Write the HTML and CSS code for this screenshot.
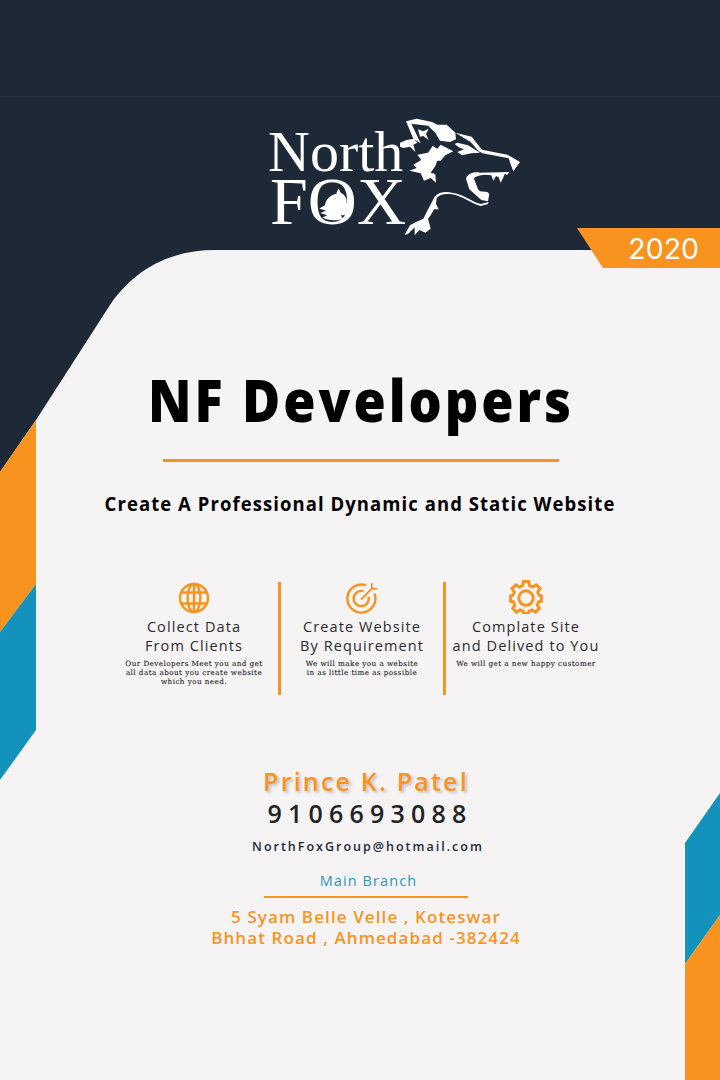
FILE: index.html
```html
<!DOCTYPE html>
<html lang="en">
<head>
<meta charset="utf-8">
<title>NF Developers</title>
<link rel="stylesheet" href="styles.css">
</head>
<body>
<main class="poster">
  <svg class="backdrop" viewBox="0 0 720 1080" aria-hidden="true">
    <rect class="paper" width="720" height="1080"/>
    <path class="navy" d="M0 0H720V250H215C172 250 135 268 110 305L36 420L0 472Z"/>
    <path class="seam" d="M0 96.5H720"/>
    <path class="orange" d="M36 420V584L0 632V472Z"/>
    <path class="blue" d="M36 584V730L0 780V632Z"/>
    <path class="blue" d="M720 793V915L685 964V843Z"/>
    <path class="orange" d="M720 915V1080H685V964Z"/>
  </svg>

  <div class="badge">2020</div>

  <header class="logo">
    <div class="logo-words">
      <span class="logo-north">North</span>
      <span class="logo-fox">F<span class="logo-o">O<svg class="logo-head" viewBox="0 0 30 30" aria-hidden="true"><path d="M5 27L9 25L3 23L8 21L2 19L7 16C8 10 13 7 17 6L19 1L21 5C25 7 27 11 26 14L29 17L26 20C27 24 24 25 21 25L23 28C17 30 10 30 5 27Z"/></svg></span>X</span>
    </div>
    <svg class="wolf" viewBox="0 0 375 375" aria-hidden="true">
      <g class="wolf-fill">
        <path d="M18 28L50 20L96 30L112 38L140 38L166 62L168 82L150 90L120 86L106 62L84 41L34 35L62 94L40 80Z"/>
        <path d="M54 52L70 58L86 50L78 66L86 84L70 72L60 74Z"/>
        <path d="M166 62L215 74L246 113L322 128L360 150L340 178L333 160L326 139L248 124L236 118L212 90Z"/>
        <path d="M164 96L172 92L204 100L240 122L214 124L186 130L172 120L192 112L176 106Z"/>
        <path d="M98 102L112 110L122 98L160 118L136 130L122 146L112 146L106 162L92 182L106 186L108 212L92 198L72 206L62 184L28 176L50 168L40 158L64 144L52 128L84 122Z"/>
        <path d="M0 92L20 84L42 80L52 92L40 98L46 120L30 104L10 108L0 104Z"/>
        <path d="M198 200C202 186 220 178 240 182L328 180L322 188L314 186L308 200L302 212L296 196L288 192L280 206L274 190L254 188C240 190 226 192 222 200L234 232L240 238L262 240L268 246L264 268L244 264L224 246L208 232Z"/>
        <path d="M104 254C116 240 136 238 156 242C190 246 214 268 242 276L266 270L264 276L242 282C212 274 188 252 156 247C136 244 120 246 110 258L108 276L116 292L102 292L92 310L84 320L92 350L76 362L58 354L44 370L44 346L24 366L14 368L30 340L48 330L70 320L82 296Z"/>
      </g>
    </svg>
  </header>

  <section class="intro">
    <h1>NF Developers</h1>
    <hr class="rule">
    <h2>Create A Professional Dynamic and Static Website</h2>
  </section>

  <section class="features">
    <article class="feature">
      <svg class="icon" viewBox="0 0 32 32" aria-hidden="true">
        <circle cx="16" cy="16" r="14"/>
        <ellipse cx="16" cy="16" rx="6.4" ry="14"/>
        <path d="M16 2V30M3.6 10.5H28.4M3.6 21.5H28.4"/>
      </svg>
      <h3>Collect Data<br>From Clients</h3>
      <p>Our Developers Meet you and get<br>all data about you create website<br>which you need.</p>
    </article>
    <article class="feature">
      <svg class="icon" viewBox="0 0 32 32" aria-hidden="true">
        <path d="M20 3.4A14 14 0 1 0 28.4 11.5"/>
        <path d="M17.4 9.2A7.6 7.6 0 1 0 22.6 14.6"/>
        <path class="icon-thin" d="M15 17.5L26 6.5M25.8 1V6.6H31.5"/>
      </svg>
      <h3>Create Website<br>By Requirement</h3>
      <p>We will make you a website<br>in as little time as possible</p>
    </article>
    <article class="feature">
      <svg class="icon icon-gear" viewBox="0 0 32 32" aria-hidden="true">
        <path d="M13.5 1.5H18.5L19.3 5.4L22.3 6.7L25.7 4.5L29.2 8L27 11.4L28.3 14.4L30.5 15V20L27.8 20.6L26.6 23.5L28.4 26.8L24.9 30.3L21.6 28.1L18.8 29.2L18.3 31.5H13.7L13.2 29.2L10.4 28.1L7.1 30.3L3.6 26.8L5.4 23.5L4.2 20.6L1.5 20V15L3.7 14.4L5 11.4L2.8 8L6.3 4.5L9.7 6.7L12.7 5.4Z"/>
        <circle cx="16" cy="17" r="6.8"/>
      </svg>
      <h3>Complate Site<br>and Delived to You</h3>
      <p>We will get a new happy customer</p>
    </article>
  </section>

  <address class="contact">
    <div class="name">Prince K. Patel</div>
    <div class="phone">9106693088</div>
    <div class="email">NorthFoxGroup@hotmail.com</div>
    <div class="branch">Main Branch</div>
    <hr class="branch-rule">
    <div class="street">5 Syam Belle Velle , Koteswar<br>Bhhat Road , Ahmedabad -382424</div>
  </address>
</main>
</body>
</html>
```
FILE: styles.css
```css
* { box-sizing: border-box; }
html, body { margin: 0; padding: 0; }
body { width: 720px; height: 1080px; overflow: hidden; font-family: "Open Sans", "Liberation Sans", sans-serif; }

.poster { position: relative; width: 720px; height: 1080px; overflow: hidden; padding-top: 112px; background: #f5f3f4; color: #222; }
.backdrop { position: absolute; inset: 0; width: 720px; height: 1080px; }
.paper { fill: #f5f3f4; }
.navy { fill: #1e2938; }
.seam { stroke: #273345; stroke-width: 1; fill: none; }
.orange { fill: #f9931f; }
.blue { fill: #1393bb; }

.badge {
  position: absolute; top: 228px; right: 0; width: 143px; height: 40px;
  padding: 1px 21px 0 0; text-align: right;
  background: #f9931f; clip-path: polygon(0 0, 100% 0, 100% 100%, 26px 100%);
  color: #fff; font-family: Inter, sans-serif; font-size: 28.5px; font-weight: 400; line-height: 40px;
}

.logo { position: relative; display: flex; height: 123px; padding-left: 268px; }
.logo-words { display: flex; flex-direction: column; width: 137px; padding-top: 14px; font-family: "Liberation Serif", serif; color: #fff; }
.logo-north { display: block; height: 46px; font-size: 58px; line-height: 52px; }
.logo-fox { display: block; height: 50px; padding-left: 2px; font-size: 68px; line-height: 58px; white-space: nowrap; }
.logo-o { position: relative; display: inline-block; }
.logo-head { position: absolute; left: 9px; top: 15px; width: 34px; height: 34px; fill: #fff; }
.wolf { flex: none; width: 125px; height: 125px; margin-left: -5px; }
.wolf-fill { fill: #fff; }

.intro { position: relative; margin-top: 125px; text-align: center; }
h1 { margin: 0; padding-left: 2px; font-size: 58px; line-height: 80px; font-weight: 800; color: #000; letter-spacing: 3.3px; transform: scaleX(.9); }
.rule { width: 396px; height: 3px; margin: 19px 0 0 163px; border: 0; background: #f9931f; }
h2 { margin: 24px 0 0; font-size: 20px; line-height: 36px; font-weight: 700; color: #000; letter-spacing: 1.15px; transform: scaleX(.925); }

.features { position: relative; display: flex; margin: 60px 0 0 110px; height: 113px; }
.feature { width: 165px; text-align: center; border-right: 3px solid #f9931f; }
.feature:first-child { width: 171px; }
.feature:last-child { border-right: 0; width: 160px; }
.icon { display: block; width: 32px; height: 32px; margin: 0 auto; fill: none; stroke: #f9931f; stroke-width: 2.4; }
.icon-gear { stroke-width: 2.8; margin-top: -2px; margin-bottom: 2px; width: 34px; height: 34px; }
.icon-thin { stroke-width: 1.8; }
h3 { margin: 3px 0 0; font-size: 14.5px; line-height: 19px; font-weight: 500; color: #2a2a2e; letter-spacing: 1.1px; }
.feature p { margin: 4px 0 0; font-family: "DejaVu Serif", serif; font-size: 7.2px; line-height: 9px; font-weight: 400; color: #222; letter-spacing: .45px; -webkit-text-stroke: .1px #222; }

.contact { position: relative; margin-top: 70px; padding-left: 12px; text-align: center; font-style: normal; }
.name { font-size: 25px; line-height: 32px; font-weight: 600; color: #f9931f; letter-spacing: 2.2px; text-shadow: 2px 2px 3px rgba(90, 90, 90, .35); }
.phone { padding-left: 8px; font-size: 25px; line-height: 33px; font-weight: 600; color: #222; letter-spacing: 6.2px; }
.email { margin-top: 7px; padding-left: 4px; font-size: 12.5px; line-height: 20px; font-weight: 600; color: #1e2938; letter-spacing: 2px; }
.branch { margin-top: 14px; padding-left: 5px; font-size: 14.5px; line-height: 20px; font-weight: 500; color: #2f95bd; letter-spacing: 1.1px; }
.branch-rule { width: 204px; height: 2px; margin: 5px 0 0 252px; border: 0; background: #f9931f; }
.street { margin-top: 8px; font-size: 17px; line-height: 21px; font-weight: 600; color: #f9931f; letter-spacing: 1.1px; }
```
